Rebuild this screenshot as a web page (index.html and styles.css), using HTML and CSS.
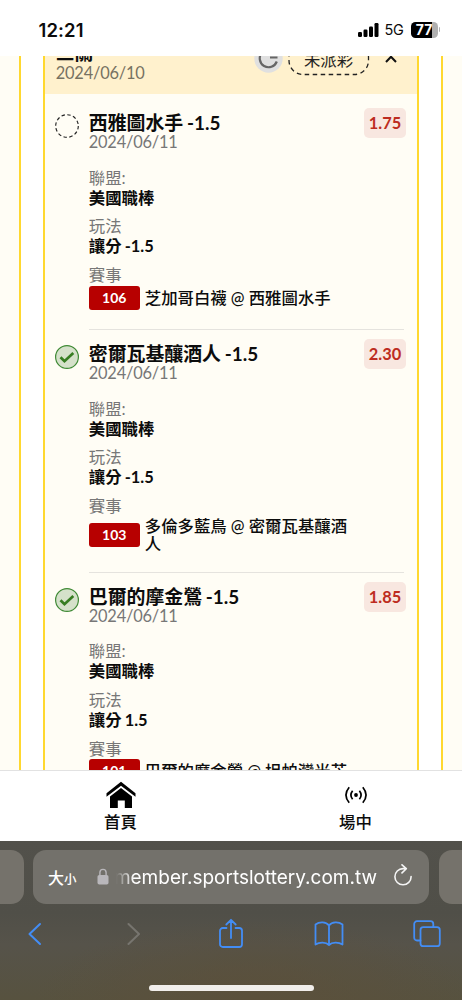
FILE: index.html
```html
<!DOCTYPE html>
<html lang="zh-Hant">
<head>
<meta charset="utf-8">
<meta name="viewport" content="width=device-width, initial-scale=1">
<title>投注紀錄</title>
<link rel="stylesheet" href="styles.css">
</head>
<body>
<header class="status">
  <span class="clock">12:21</span>
  <div class="status-right">
    <svg width="21" height="14" viewBox="0 0 21 14"><rect x="0" y="9" width="4" height="5" rx="1.2"/><rect x="5.5" y="6.5" width="4" height="7.5" rx="1.2"/><rect x="11" y="3.5" width="4" height="10.500" rx="1.2"/><rect x="16.500" y="0" width="4" height="14" rx="1.2"/></svg>
    <span class="net">5G</span>
    <span class="battery">77</span><i class="battery-cap"></i>
  </div>
</header>

<main class="view">
  <div class="side side-left"></div>
  <section class="card">
    <div class="card-head">
      <div class="head-text"><div class="head-title">三關</div><div class="date">2024/06/10</div></div>
      <svg class="coin" width="29" height="29" viewBox="0 0 29 29"><circle cx="14.500" cy="14.500" r="14.200" fill="#e0e0e0"/><path d="M23.500 13.500H16M22.800 17.500A8.800 8.800 0 1 1 21.500 9" fill="none" stroke="#666" stroke-width="2.200"/></svg>
      <svg class="pill" width="82" height="34" viewBox="0 0 82 34"><rect x="1" y="1" width="79.500" height="31.500" rx="14" fill="none" stroke="#222" stroke-width="1.300" stroke-dasharray="4.500 3.500"/><text x="40.500" y="24" text-anchor="middle">未派彩</text></svg>
      <svg class="chev" width="12" height="8" viewBox="0 0 12 8"><path d="M1 7 6 1.700 11 7" fill="none" stroke="#111" stroke-width="2"/></svg>
    </div>

    <article class="leg first">
      <svg class="mark" width="24" height="24" viewBox="0 0 24 24"><circle cx="12" cy="12" r="11.300" fill="none" stroke="#222" stroke-width="1.150" stroke-dasharray="3.450 2.460"/></svg>
      <div class="info">
        <div class="title">西雅圖水手 <b>-1.5</b></div>
        <div class="date">2024/06/11</div>
        <dl>
          <dt>聯盟:</dt><dd>美國職棒</dd>
          <dt>玩法</dt><dd>讓分 <b>-1.5</b></dd>
          <dt>賽事</dt>
        </dl>
        <div class="match"><span class="num">106</span><span class="teams">芝加哥白襪 @ 西雅圖水手</span></div>
      </div>
      <span class="odds">1.75</span>
    </article>

    <hr>
    <article class="leg second">
      <svg class="mark" width="24" height="24" viewBox="0 0 24 24"><circle cx="12" cy="12" r="11.400" fill="#d5e1ca" stroke="#3f8a35" stroke-width="1.200"/><path d="m5.500 12.200 4 4L18.300 8" fill="none" stroke="#377d22" stroke-width="2.700"/></svg>
      <div class="info">
        <div class="title">密爾瓦基釀酒人 <b>-1.5</b></div>
        <div class="date">2024/06/11</div>
        <dl>
          <dt>聯盟:</dt><dd>美國職棒</dd>
          <dt>玩法</dt><dd>讓分 <b>-1.5</b></dd>
          <dt>賽事</dt>
        </dl>
        <div class="match"><span class="num">103</span><span class="teams">多倫多藍鳥 @ 密爾瓦基釀酒<br>人</span></div>
      </div>
      <span class="odds">2.30</span>
    </article>

    <hr>
    <article class="leg third">
      <svg class="mark" width="24" height="24" viewBox="0 0 24 24"><circle cx="12" cy="12" r="11.400" fill="#d5e1ca" stroke="#3f8a35" stroke-width="1.200"/><path d="m5.500 12.200 4 4L18.300 8" fill="none" stroke="#377d22" stroke-width="2.700"/></svg>
      <div class="info">
        <div class="title">巴爾的摩金鶯 <b>-1.5</b></div>
        <div class="date">2024/06/11</div>
        <dl>
          <dt>聯盟:</dt><dd>美國職棒</dd>
          <dt>玩法</dt><dd>讓分 <b>1.5</b></dd>
          <dt>賽事</dt>
        </dl>
        <div class="match"><span class="num">101</span><span class="teams">巴爾的摩金鶯 @ 坦帕灣光芒</span></div>
      </div>
      <span class="odds">1.85</span>
    </article>
  </section>
  <div class="side side-right"></div>
</main>

<nav class="tabs">
  <a class="tab tab-home">
    <svg width="30" height="28" viewBox="0 0 30 28"><path d="M.5 12.200 15 .8l14.500 11.400v3.600L15 4.700.5 15.800z"/><path d="M4 15.400 15 7l11 8.400V27h-7.200v-7.500h-7V27H4z"/></svg>
    <span>首頁</span>
  </a>
  <a class="tab tab-live">
    <svg width="24" height="28" viewBox="0 0 24 28"><circle cx="12" cy="14" r="1.900"/><path d="M8.600 9.700Q5.200 14 8.600 18.300M15.400 9.700q3.400 4.300 0 8.600M5.200 6.200q-6.500 7.800 0 15.600M18.800 6.200q6.500 7.800 0 15.600" fill="none" stroke="#000" stroke-width="1.700"/></svg>
    <span>場中</span>
  </a>
</nav>

<footer class="browser">
  <div class="address-row">
    <div class="peek peek-left"></div>
    <div class="address">
      <span class="aa">大<small>小</small></span>
      <svg class="lock" width="12" height="17" viewBox="0 0 12 17"><rect x=".5" y="7" width="11" height="9.500" rx="1.800" fill="#b9b7bb"/><path d="M2.900 8V4.500a3.100 3.100 0 0 1 6.200 0V8" fill="none" stroke="#b9b7bb" stroke-width="1.400"/></svg>
      <span class="url">member.sportslottery.com.tw</span>
      <svg class="reload" width="20" height="22" viewBox="0 0 20 22"><path d="M10 4.600A8.100 8.100 0 1 0 18.100 12.600M10 4.600h3.200M9 .8l4.300 3.900L9 8.900" fill="none" stroke="#f4f4f4" stroke-width="1.600" stroke-linecap="round" stroke-linejoin="round"/></svg>
    </div>
    <div class="peek peek-right"></div>
  </div>
  <div class="tools">
    <svg width="14" height="24" viewBox="0 0 14 24"><path d="M12 2 1.500 12 12 22" stroke-width="2"/></svg>
    <svg class="off" width="14" height="24" viewBox="0 0 14 24"><path d="M2.500 2 13 12 2.500 22" stroke-width="2"/></svg>
    <svg width="26" height="32" viewBox="0 0 26 32"><path d="M8.500 10H4.800a2.800 2.800 0 0 0-2.800 2.800v13.400A2.800 2.800 0 0 0 4.800 29h16.400a2.800 2.800 0 0 0 2.800-2.800V12.800a2.800 2.800 0 0 0-2.800-2.800h-3.700M13 20V2M8.300 6.500 13 1.800l4.700 4.700"/></svg>
    <svg width="30" height="26" viewBox="0 0 30 26"><path d="M15 4.500C12 .6 5.500.5 1.500 3.500v20c4-2.700 10.500-2.600 13.500.5 3-3.100 9.500-3.200 13.500-.5v-20C24.500.5 18 .6 15 4.500v19.500"/></svg>
    <svg width="28" height="28" viewBox="0 0 28 28"><path d="M7.500 20.500H4A2.800 2.800 0 0 1 1.200 17.700V4A2.800 2.800 0 0 1 4 1.200h13.500A2.800 2.800 0 0 1 20.300 4v3.200"/><rect x="7.500" y="7.200" width="19.300" height="19" rx="2.800"/></svg>
  </div>
  <div class="home-bar"></div>
</footer>
</body>
</html>
```
FILE: styles.css
```css
* { box-sizing: border-box; }
body {
  margin: 0;
  width: 462px;
  height: 1000px;
  overflow: hidden;
  display: flex;
  flex-direction: column;
  background: #fff;
  color: #0c0c0c;
  font-family: Lato, "Noto Sans CJK TC", sans-serif;
  font-size: 16.4px;
}
svg { display: block; flex: none; }

.status {
  flex: 0 0 56px;
  display: flex;
  justify-content: space-between;
  align-items: center;
  padding: 3px 22px 0 38.5px;
  font-family: Inter, sans-serif;
}
.clock { font-size: 18.5px; font-weight: 600; letter-spacing: .1px; }
.status-right { display: flex; align-items: center; }
.net { margin-left: 6px; width: 20px; font-size: 14.500px; letter-spacing: -.2px; }
.battery {
  margin-left: 6px;
  width: 27px;
  height: 16px;
  border-radius: 4.5px;
  background: linear-gradient(90deg, #000 77%, #b0b0b0 77%);
  color: #fff;
  font-size: 14px;
  font-weight: 700;
  line-height: 16px;
  text-align: center;
}
.battery-cap { width: 1.500px; height: 5px; margin-left: 1px; border-radius: 0 2px 2px 0; background: #b0b0b0; }

.view { flex: 0 0 714px; display: flex; justify-content: space-between; overflow: hidden; }
.side { background: #fffdf5; }
.side-left { width: 21.300px; border-right: 2px solid #ffd82f; }
.side-right { width: 21.500px; border-left: 2px solid #ffd82f; }
.card { width: 376.300px; border: solid #ffd82f; border-width: 0 2px; background: #fffdf5; }
.card-head {
  height: 38px;
  padding: 0 20px 0 11px;
  display: flex;
  align-items: flex-end;
  overflow: hidden;
  background: #fff1cd;
}
.head-text { flex: 1; padding-bottom: 11px; }
.head-title { font-size: 18.800px; font-weight: 600; line-height: 22px; position: relative; top: 1px; }
.card-head .date { color: #777262; }
.coin { margin-bottom: 21px; }
.pill { margin: 0 0 18px 5px; }
.pill text { font-size: 16.400px; fill: #222; }
.chev { margin: 0 0 31px 15px; }

.date { color: #777; font-size: 16.400px; letter-spacing: -.2px; line-height: 20px; }
.leg { display: flex; align-items: flex-start; padding: 9px 12px 0 11px; }
.leg.first { padding-top: 14px; height: 235px; }
.leg.second { height: 241.500px; }
hr {
  height: 1px;
  margin: 0 13px 0 44px;
  border: 0;
  background: #e5e3de;
}
.mark { margin: 6px 9.500px 0 -.5px; }
.info { flex: 1; margin-right: -60px; }
.title { padding-top: 1px; font-size: 18.900px; font-weight: 600; line-height: 27px; height: 24px; white-space: nowrap; }
.title b, dd b { margin-left: -1px; font-weight: 700; }
dl { margin: 15.500px 0 0; line-height: 20px; }
dt { color: #777; }
dd { margin: 0 0 8.800px; font-weight: 600; }
.match { display: flex; align-items: center; min-height: 24px; margin-top: .7px; }
.num {
  width: 51px;
  height: 24px;
  margin-right: 5px;
  flex: none;
  border-radius: 3px;
  background: #b70000;
  color: #fff;
  font-size: 14px;
  font-weight: 700;
  line-height: 24px;
  text-align: center;
}
.teams { font-weight: 500; line-height: 18px; white-space: nowrap; }
.odds {
  width: 42px;
  height: 30px;
  margin: 0 -1px 0 60px;
  flex: none;
  border-radius: 5px;
  background: #f8e7e0;
  color: #bd2c21;
  font-weight: 700;
  line-height: 30px;
  text-align: center;
}

.tabs { flex: 0 0 71px; display: flex; border-top: 1px solid #e2e2e2; background: #fff; }
.tab { display: flex; flex-direction: column; align-items: center; padding-top: 10px; }
.tab span { font-size: 16.400px; font-weight: 500; line-height: 24px; margin-top: 1px; }
.tab-home { width: 241px; }
.tab-live { width: 229px; margin-right: -8px; }

.browser {
  flex: 1;
  display: flex;
  flex-direction: column;
  padding-top: 9px;
  background: radial-gradient(ellipse 220px 80px at 55% 100%, #5b503b, transparent), linear-gradient(#52514b, #504f48 45%, #56534a 65%, #57523f);
}
.address-row { display: flex; justify-content: space-between; height: 54px; }
.peek { width: 23.500px; background: #75726b; }
.peek-left { border-radius: 0 13px 13px 0; }
.peek-right { border-radius: 13px 0 0 13px; }
.address {
  width: 396px;
  padding: 0 16px;
  display: flex;
  align-items: center;
  border-radius: 13px;
  background: #73716b;
  color: #fff;
}
.aa { width: 50px; margin-left: -1px; font-size: 16px; font-weight: 500; white-space: nowrap; }
.aa small { font-size: 12.500px; }
.lock { margin-top: -2px; }
.url {
  width: 268px;
  margin-left: 7px;
  display: flex;
  justify-content: flex-end;
  overflow: hidden;
  font-family: Inter, sans-serif;
  font-size: 19px;
  line-height: 30px;
  padding-top: 2px;
  -webkit-mask-image: linear-gradient(90deg, transparent, #000 18px);
  mask-image: linear-gradient(90deg, transparent, #000 18px);
}
.reload { margin: -4px 0 0 16px; }
.tools { height: 60px; display: grid; grid-template-columns: repeat(5, 98px); align-items: center; justify-content: center; justify-items: center; }
.tools svg { fill: none; stroke: #438df5; stroke-width: 1.800; stroke-linecap: round; stroke-linejoin: round; }
.tools .off { stroke: #77756f; }
.home-bar { width: 165px; height: 6px; margin: 21px auto 0; border-radius: 3px; background: #f1eeeb; }
```
